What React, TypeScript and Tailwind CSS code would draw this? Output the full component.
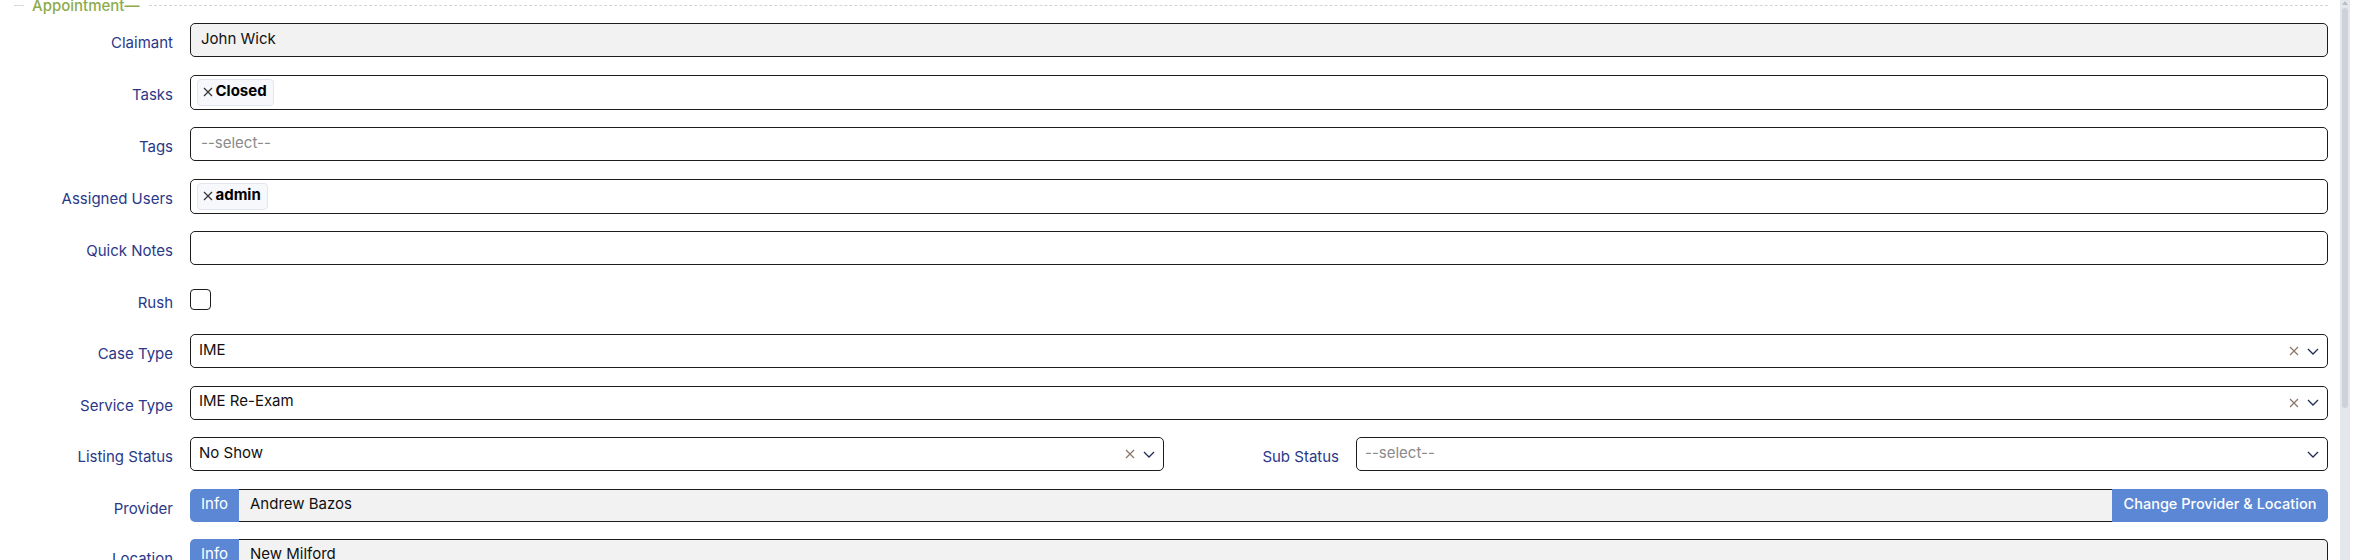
import type { ReactNode } from 'react'

const font = { fontFamily: 'Inter, "Noto Sans", sans-serif' }

function Label({ children }: { children: ReactNode }) {
  return (
    <div className="w-[173px] shrink-0 pt-[10px] text-right text-[15px] leading-5 text-[#2b3889]">
      {children}
    </div>
  )
}

function Row({ label, children }: { label: string; children: ReactNode }) {
  return (
    <div className="flex items-start gap-[17px]">
      <Label>{label}</Label>
      <div className="min-w-0 flex-1">{children}</div>
    </div>
  )
}

function ClearX({ className = '', color = '#8c7466' }: { className?: string; color?: string }) {
  return (
    <svg width="10" height="10" viewBox="0 0 10 10" className={className}>
      <path d="M1 1 L9 9 M9 1 L1 9" stroke={color} strokeWidth="1.2" fill="none" />
    </svg>
  )
}

function Chevron() {
  return (
    <svg width="12" height="7" viewBox="0 0 12 7">
      <path d="M1 1 L6 6 L11 1" stroke="#1f2b55" strokeWidth="1.3" fill="none" />
    </svg>
  )
}

function TextBox({ value, disabled, placeholder }: { value?: string; disabled?: boolean; placeholder?: string }) {
  return (
    <div
      className={`flex h-[34px] items-center rounded-[5px] border-[1.5px] border-[#1c1c1c] pb-[2px] pl-[10px] text-[15px] ${
        disabled ? 'bg-[#f2f2f2]' : 'bg-white'
      }`}
    >
      {value ? <span className="text-[#111]">{value}</span> : <span className="text-[#8a8a8a]">{placeholder}</span>}
    </div>
  )
}

function Chips({ items }: { items: string[] }) {
  return (
    <div className="flex h-[35px] items-center gap-1 rounded-[5px] border-[1.5px] border-[#1c1c1c] bg-white pl-[5.5px]">
      {items.map(item => (
        <span
          key={item}
          className="flex h-[27px] items-center gap-[3px] rounded-[4px] border border-[#e1e6f0] bg-[#f7f8fc] pl-[5px] pr-[6px] text-[15px]"
        >
          <ClearX color="#333" />
          <span className="pb-[2px] font-bold text-black">{item}</span>
        </span>
      ))}
    </div>
  )
}

function Select({ value, placeholder, clearable }: { value?: string; placeholder?: string; clearable?: boolean }) {
  return (
    <div className="flex h-[34px] items-center rounded-[5px] border-[1.5px] border-[#1c1c1c] bg-white pl-[8px] pr-[8px] text-[15px]">
      <span className={`flex-1 pb-[2px] ${value ? 'text-[#111]' : 'text-[#8a8a8a]'}`}>{value ?? placeholder}</span>
      {clearable && <ClearX className="mr-[8px]" />}
      <Chevron />
    </div>
  )
}

function InfoField({ value, action }: { value: string; action?: string }) {
  return (
    <div className="flex h-[33px] text-[15px]">
      <button className="flex w-[49px] items-center justify-center rounded-l-[5px] bg-[#5b87d4] pb-[2px] text-white">
        Info
      </button>
      <div
        className={`flex flex-1 items-center border-y-[1.5px] border-[#1c1c1c] bg-[#f2f2f2] pb-[2px] pl-[11px] text-[#111] ${
          action ? '' : 'rounded-r-[5px] border-r-[1.5px]'
        }`}
      >
        {value}
      </div>
      {action && (
        <button className="flex w-[216px] items-center justify-center rounded-r-[5px] bg-[#5b87d4] pb-[2px] text-[14.5px] font-medium text-white">
          {action}
        </button>
      )}
    </div>
  )
}

export default function App() {
  return (
    <div className="flex h-[560px] w-[2365px] overflow-hidden bg-white" style={font}>
      <div className="w-[2328px] shrink-0">
        {/* fieldset legend */}
        <div className="-mt-[4.5px] flex h-5 items-center">
          <div className="ml-[14px] w-[10px] border-t border-dashed border-[#d4d4d4]" />
          <span className="ml-[8px] text-[15px] leading-5 font-medium text-[#8cab4c]">Appointment—</span>
          <div className="ml-[10px] flex-1 border-t border-dashed border-[#d4d4d4]" />
        </div>

        <div className="mt-[7.5px] flex flex-col gap-[17.5px]">
          <Row label="Claimant">
            <TextBox value="John Wick" disabled />
          </Row>
          <Row label="Tasks">
            <Chips items={['Closed']} />
          </Row>
          <Row label="Tags">
            <TextBox placeholder="--select--" />
          </Row>
          <Row label="Assigned Users">
            <Chips items={['admin']} />
          </Row>
          <Row label="Quick Notes">
            <TextBox />
          </Row>
          <Row label="Rush">
            <div className="flex h-[34px] items-center">
              <div className="h-[21px] w-[21px] rounded-[4px] border-[1.5px] border-[#1c1c1c]" />
            </div>
          </Row>
          <Row label="Case Type">
            <Select value="IME" clearable />
          </Row>
          <Row label="Service Type">
            <Select value="IME Re-Exam" clearable />
          </Row>
          <div className="grid grid-cols-2">
            <Row label="Listing Status">
              <Select value="No Show" clearable />
            </Row>
            <div className="flex items-start gap-[17px]">
              <div className="w-[175px] shrink-0 pt-[10px] text-right text-[15px] leading-5 text-[#2b3889]">Sub Status</div>
              <div className="min-w-0 flex-1">
                <Select placeholder="--select--" />
              </div>
            </div>
          </div>
          <Row label="Provider">
            <InfoField value="Andrew Bazos" action="Change Provider & Location" />
          </Row>
          <Row label="Location">
            <InfoField value="New Milford" />
          </Row>
        </div>
      </div>

      {/* scrollbar */}
      <div className="ml-[12px] flex h-full w-[10px] flex-col items-center bg-[#e4e7eb] pt-[1px]">
        <div className="h-0 w-0 border-x-[3px] border-b-[4px] border-x-transparent border-b-[#b9bec6]" />
        <div className="mt-[3px] h-[400px] w-[6px] rounded-[3px] bg-[#cdd1d8]" />
      </div>
    </div>
  )
}
